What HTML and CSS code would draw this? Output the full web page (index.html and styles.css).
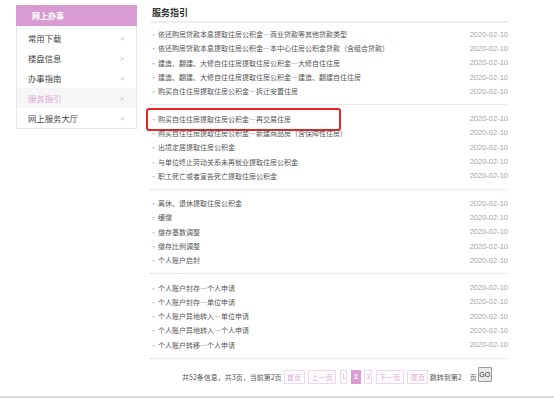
FILE: index.html
```html
<!DOCTYPE html>
<html lang="zh-CN">
<head>
  <meta charset="UTF-8" />
  <title>服务指引</title>
  <link rel="stylesheet" href="styles.css">
</head>
<body>

  <div class="page">

    <!-- Sidebar -->
    <aside class="side">
      <div class="side-head">网上办事</div>
      <a class="side-item" href="#"><span>常用下载</span><span class="arrow">&gt;</span></a>
      <a class="side-item" href="#"><span>楼盘信息</span><span class="arrow">&gt;</span></a>
      <a class="side-item" href="#"><span>办事指南</span><span class="arrow">&gt;</span></a>
      <a class="side-item active" href="#"><span>服务指引</span><span class="arrow">&gt;</span></a>
      <a class="side-item" href="#"><span>网上服务大厅</span><span class="arrow">&gt;</span></a>
    </aside>

    <!-- Main list -->
    <main class="main">
      <h2 class="title">服务指引</h2>

      <ul class="group first">
        <li><a href="#">依还购房贷款本息提取住房公积金—商业贷款等其他贷款类型</a><span class="date">2020-02-10</span></li>
        <li><a href="#">依还购房贷款本息提取住房公积金—本中心住房公积金贷款（含组合贷款）</a><span class="date">2020-02-10</span></li>
        <li><a href="#">建造、翻建、大修自住住房提取住房公积金—大修自住住房</a><span class="date">2020-02-10</span></li>
        <li><a href="#">建造、翻建、大修自住住房提取住房公积金—建造、翻建自住住房</a><span class="date">2020-02-10</span></li>
        <li><a href="#">购买自住住房提取住房公积金—拆迁安置住房</a><span class="date">2020-02-10</span></li>
      </ul>

      <ul class="group">
        <li class="marked"><a href="#">购买自住住房提取住房公积金—再交易住房</a><span class="date">2020-02-10</span></li>
        <li><a href="#">购买自住住房提取住房公积金—新建商品房（含保障性住房）</a><span class="date">2020-02-10</span></li>
        <li><a href="#">出境定居提取住房公积金</a><span class="date">2020-02-10</span></li>
        <li><a href="#">与单位终止劳动关系未再就业提取住房公积金</a><span class="date">2020-02-10</span></li>
        <li><a href="#">职工死亡或者宣告死亡提取住房公积金</a><span class="date">2020-02-10</span></li>
      </ul>

      <ul class="group">
        <li><a href="#">离休、退休提取住房公积金</a><span class="date">2020-02-10</span></li>
        <li><a href="#">缓缴</a><span class="date">2020-02-10</span></li>
        <li><a href="#">缴存基数调整</a><span class="date">2020-02-10</span></li>
        <li><a href="#">缴存比例调整</a><span class="date">2020-02-10</span></li>
        <li><a href="#">个人账户启封</a><span class="date">2020-02-10</span></li>
      </ul>

      <ul class="group">
        <li><a href="#">个人账户封存—个人申请</a><span class="date">2020-02-10</span></li>
        <li><a href="#">个人账户封存—单位申请</a><span class="date">2020-02-10</span></li>
        <li><a href="#">个人账户异地转入—单位申请</a><span class="date">2020-02-10</span></li>
        <li><a href="#">个人账户异地转入—个人申请</a><span class="date">2020-02-10</span></li>
        <li><a href="#">个人账户转移—个人申请</a><span class="date">2020-02-10</span></li>
      </ul>

      <!-- Pager -->
      <div class="pager">
        <span class="info">共52条信息，共3页，当前第2页</span>
        <a class="pg" href="#">首页</a>
        <a class="pg" href="#">上一页</a>
        <a class="pg num" href="#">1</a>
        <a class="pg num current" href="#">2</a>
        <a class="pg num" href="#">3</a>
        <a class="pg" href="#">下一页</a>
        <a class="pg" href="#">尾页</a>
        <span class="jump">跳转到第<input class="jump-input" type="text" value="2">页</span>
        <button class="go">GO</button>
      </div>
    </main>
  </div>

  <div class="footer-line"></div>

</body>
</html>
```

FILE: styles.css
```css
/* Reset and base */
* {
  margin: 0;
  padding: 0;
  box-sizing: border-box;
}

body {
  font-family: "Noto Sans CJK SC", "Liberation Sans", sans-serif;
  background: #fff;
  color: #555;
}

a {
  text-decoration: none;
  color: inherit;
}

ul {
  list-style: none;
}

.page {
  display: flex;
  align-items: flex-start;
  padding: 5px 0 0 16px;
}

/* Sidebar */
.side {
  width: 121px;
  border: 1px solid #e8e8e8;
  border-top: none;
}

.side-head {
  height: 21px;
  line-height: 21px;
  margin: 0 -1px 2px;
  padding-left: 16px;
  background: #d99cd2;
  color: #fff;
  font-size: 8px;
  font-weight: 700;
}

.side-item {
  display: flex;
  justify-content: space-between;
  align-items: center;
  height: 20px;
  padding: 0 12px 0 11px;
  font-size: 8.4px;
  color: #444;
}

.side-item .arrow {
  font-family: "Liberation Sans", sans-serif;
  color: #bbb;
  font-size: 7px;
}

.side-item.active {
  background: #f6f6f6;
  color: #dba5d6;
}

/* Main list */
.main {
  width: 358px;
  margin-left: 13px;
}

.title {
  height: 18px;
  line-height: 16px;
  padding-left: 2px;
  font-size: 9px;
  font-weight: 600;
  color: #333;
  border-bottom: 2px solid #eee;
}

.group {
  padding: 6px 0;
  border-bottom: 1px dotted #d6d6d6;
}

.group.first {
  padding: 4px 0 6px;
}

.group li {
  position: relative;
  display: flex;
  justify-content: space-between;
  align-items: center;
  height: 14.3px;
  font-size: 7px;
}

.group li::before {
  content: "·";
  width: 8px;
  flex: none;
  color: #aaa;
  font-size: 7px;
}

.group li a {
  flex: 1;
  color: #555;
  white-space: nowrap;
}

.group .date {
  font-family: "Liberation Sans", sans-serif;
  font-size: 7.5px;
  color: #a5a5a5;
}

/* red annotation box over one row */
.group li.marked::after {
  content: "";
  position: absolute;
  left: -4px;
  top: -3px;
  width: 191px;
  height: 19px;
  border: 2px solid #e3262a;
  border-radius: 3px;
}

/* Pager */
.pager {
  display: flex;
  align-items: center;
  height: 37.5px;
  padding: 0 0 1px 32px;
  font-size: 7px;
  color: #555;
}

.pager .info {
  margin-right: 2px;
}

.pg {
  height: 14px;
  line-height: 12px;
  padding: 0 2.5px;
  margin-right: 3.5px;
  border: 1px solid #f0d6ee;
  color: #dca9d8;
}

.pg.num {
  padding: 0 1px;
  font-family: "Liberation Sans", sans-serif;
}

.pg.current {
  padding: 0 2px;
  background: #d99cd2;
  border-color: #d99cd2;
  color: #fff;
  font-weight: 700;
}

.jump {
  display: flex;
  align-items: center;
  margin-left: -2px;
}

.jump-input {
  width: 12px;
  border: none;
  outline: none;
  font: inherit;
  color: #555;
  background: transparent;
}

.go {
  width: 14px;
  height: 15px;
  margin: -6px 0 0 1px;
  padding: 0;
  font-family: "Liberation Sans", sans-serif;
  font-size: 7px;
  color: #333;
  background: #e9e9e9;
  border: 1px solid #9a9a9a;
  border-radius: 1px;
}

.footer-line {
  height: 2px;
  background: #d9d9d9;
}
```
